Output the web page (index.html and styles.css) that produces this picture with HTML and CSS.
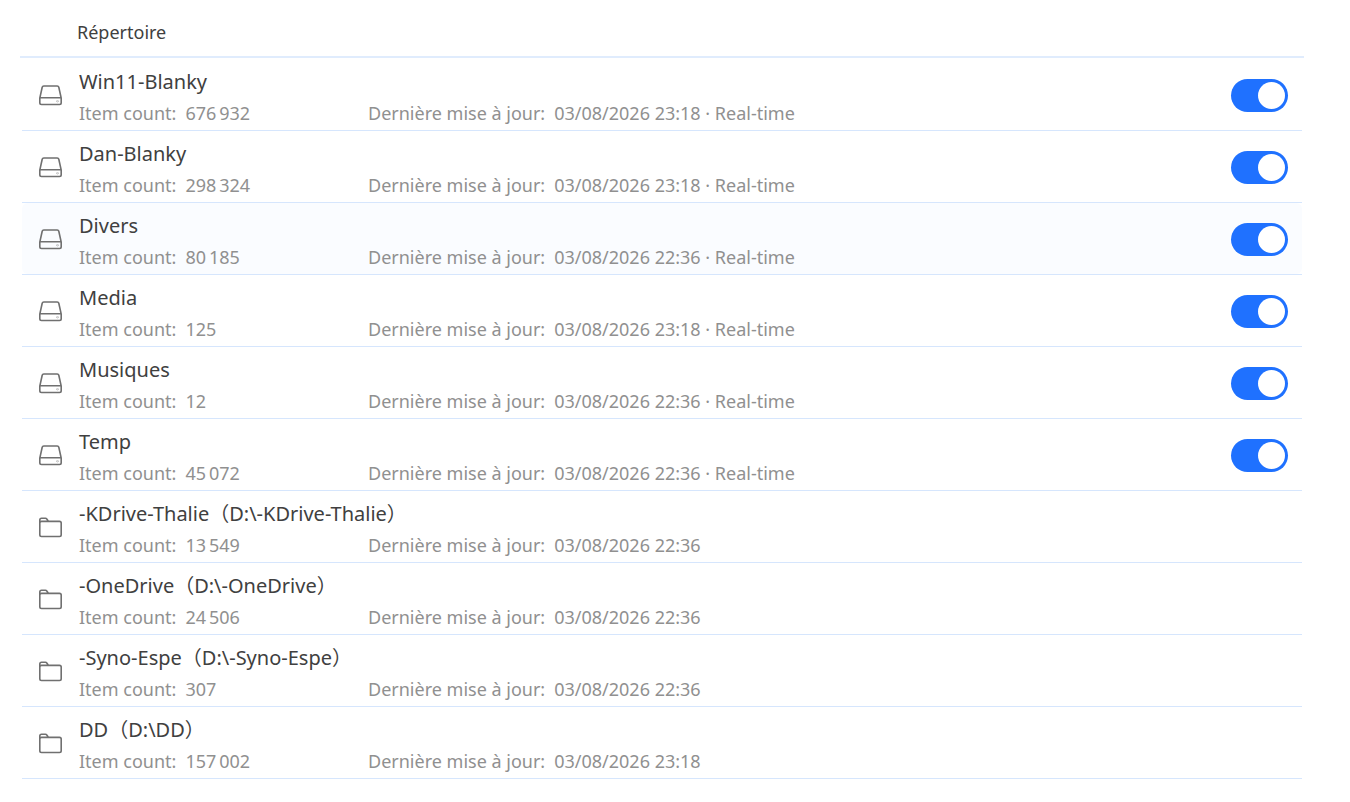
FILE: index.html
```html
<!DOCTYPE html>
<html lang="fr">
<head>
    <meta charset="UTF-8">
    <meta name="viewport" content="width=device-width, initial-scale=1.0">
    <title>Répertoire</title>
    <link rel="stylesheet" href="styles.css">
</head>
<body>
    <svg width="0" height="0" class="sprite" aria-hidden="true">
        <symbol id="drive" viewBox="0 0 24 21">
            <path d="M5.800 1h13.400q1.300 0 1.600 1.300L23.200 13v4.800q0 1.700-1.700 1.700h-18q-1.700 0-1.700-1.700V13L4.200 2.300Q4.500 1 5.800 1zM2 12.800h21"/>
            <circle cx="19.500" cy="16.200" r=".2"/>
        </symbol>
        <symbol id="folder" viewBox="0 0 24 21">
            <path d="M1.800 6V3q0-1.700 1.700-1.700h4q.8 0 1.300.7l1.700 2.400h11q1.700 0 1.700 1.700v11.700q0 1.700-1.700 1.700h-18q-1.700 0-1.700-1.700V6q0-1.600 1.700-1.600h7"/>
        </symbol>
    </svg>

    <main class="container">
        <h1 class="header">Répertoire</h1>
        <ul class="list" id="directoryList"></ul>
    </main>

    <script>
        const directories = [
            { name: 'Win11-Blanky', count: '676\u202f932', date: '03/08/2026 23:18', drive: true },
            { name: 'Dan-Blanky', count: '298\u202f324', date: '03/08/2026 23:18', drive: true },
            { name: 'Divers', count: '80\u202f185', date: '03/08/2026 22:36', drive: true, active: true },
            { name: 'Media', count: '125', date: '03/08/2026 23:18', drive: true },
            { name: 'Musiques', count: '12', date: '03/08/2026 22:36', drive: true },
            { name: 'Temp', count: '45\u202f072', date: '03/08/2026 22:36', drive: true },
            { name: '-KDrive-Thalie（D:\\-KDrive-Thalie）', count: '13\u202f549', date: '03/08/2026 22:36' },
            { name: '-OneDrive（D:\\-OneDrive）', count: '24\u202f506', date: '03/08/2026 22:36' },
            { name: '-Syno-Espe（D:\\-Syno-Espe）', count: '307', date: '03/08/2026 22:36' },
            { name: 'DD（D:\\DD）', count: '157\u202f002', date: '03/08/2026 23:18' }
        ];

        function renderName(dir, id) {
            return dir.drive
                ? `<label class="name" for="${id}">${dir.name}</label>`
                : `<span class="name">${dir.name}</span>`;
        }

        document.getElementById('directoryList').innerHTML = directories.map((dir, i) => `
            <li class="item">
                <div class="row ${dir.active ? 'active' : ''}">
                    <svg class="icon" aria-hidden="true"><use href="#${dir.drive ? 'drive' : 'folder'}"/></svg>
                    <div class="info">
                        ${renderName(dir, 'dir' + i)}
                        <div class="meta">
                            <span class="pair"><span>Item count:</span><span>${dir.count}</span></span>
                            <span class="pair"><span>Dernière mise à jour:</span><span>${dir.date}${dir.drive ? ' · Real-time' : ''}</span></span>
                        </div>
                    </div>
                    ${dir.drive ? `<input type="checkbox" class="switch" id="dir${i}" checked>` : ''}
                </div>
            </li>
        `).join('');
    </script>
</body>
</html>
```
FILE: styles.css
```css
:root {
    --primary-color: #1f71ff;
    --border-color: #d6e6fd;
    --text-color: #404040;
    --muted-color: #909090;
}

* {
    box-sizing: border-box;
    margin: 0;
    padding: 0;
}

body {
    font-family: 'Noto Sans', 'Noto Sans CJK SC', sans-serif;
    background-color: white;
    color: var(--text-color);
}

.sprite {
    position: absolute;
}

.container {
    padding: 8px 46px 20px 20px;
}

.header {
    padding-left: 57px;
    border-bottom: 2px solid #e0ecfd;
    font-size: 18px;
    font-weight: 400;
    line-height: 48px;
}

.list {
    list-style: none;
    padding: 1px 2px 0;
}

.item {
    border-bottom: 1px solid var(--border-color);
}

.row {
    display: flex;
    align-items: center;
    min-height: 71px;
    padding: 2px 14px 0 16px;
    border-radius: 6px;
}

.row.active {
    background-color: #fafcff;
}

.icon {
    width: 24px;
    height: 21px;
    margin-right: 17px;
    fill: none;
    stroke: #707070;
    stroke-width: 1.6;
}

.info {
    flex: 1;
    padding-top: 4px;
}

.name {
    display: block;
    font-size: 20px;
    line-height: 31px;
}

.meta {
    display: grid;
    grid-template-columns: 289px 1fr;
    color: var(--muted-color);
    font-size: 18px;
    line-height: 32px;
}

.pair {
    display: flex;
    gap: 9px;
}

.switch {
    appearance: none;
    display: flex;
    justify-content: flex-end;
    width: 57px;
    height: 33px;
    padding: 3px;
    border-radius: 17px;
    background-color: #ccc;
    cursor: pointer;
}

.switch:checked {
    background-color: var(--primary-color);
}

.switch::before {
    content: '';
    width: 27px;
    height: 27px;
    border-radius: 50%;
    background-color: white;
}
```
